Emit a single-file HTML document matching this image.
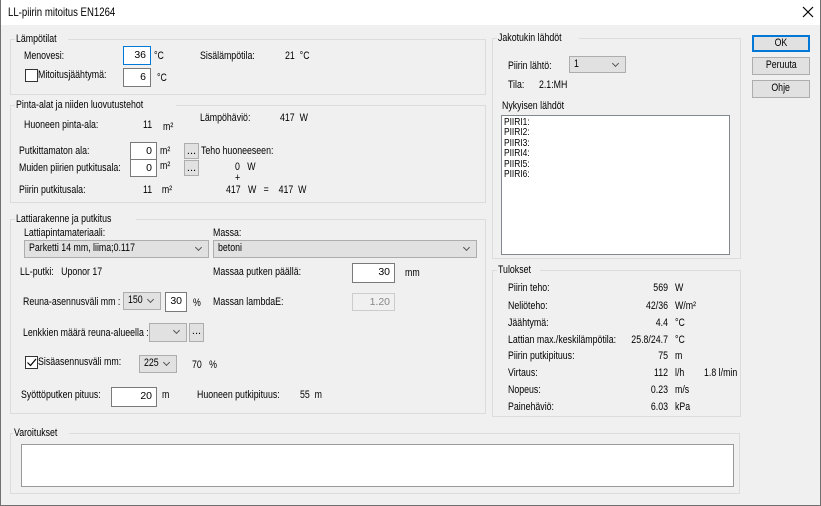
<!DOCTYPE html>
<html><head><meta charset="utf-8"><style>
*{box-sizing:border-box}
body{margin:0;width:821px;height:506px;overflow:hidden;background:#f0f0f0;font-family:"Liberation Sans",sans-serif;font-size:11px;color:#000;position:relative}
.a{position:absolute;white-space:nowrap;line-height:13px;transform:scaleX(0.8);transform-origin:left center}
.r{text-align:right;transform-origin:right center}
.s{display:inline-block;transform:scaleX(0.8);transform-origin:left center;white-space:nowrap}
.t{position:absolute;left:0;top:0;width:821px;height:25px;background:#fff}
.win{position:absolute;left:0;top:0;width:821px;height:506px;border:1px solid #707070;border-top:none;pointer-events:none}
.g{position:absolute;border:1px solid #dcdcdc}
.gl{position:absolute;background:#f0f0f0;padding:0 1px;line-height:12px;top:-7px;left:4px}
.in{position:absolute;background:#fff;border:1px solid #7a7a7a;text-align:right;padding-right:4px;line-height:16px;font-size:10.5px}
.cb{position:absolute;background:#e1e1e1;border:1px solid #adadad;padding-left:4px;line-height:15px;white-space:nowrap;overflow:hidden}
.cb:after{content:"";position:absolute;right:7px;top:4px;width:4px;height:4px;border-right:1px solid #555;border-bottom:1px solid #555;transform:rotate(45deg)}
.bt{position:absolute;background:#e1e1e1;border:1px solid #adadad;text-align:center;line-height:14px}
.ck{position:absolute;width:13px;height:13px;background:#fff;border:1px solid #333}
</style></head><body>
<div class="t"></div>
<div class="a" style="left:8px;top:6px;font-size:12px">LL-piirin mitoitus EN1264</div>
<svg style="position:absolute;left:802px;top:6px" width="12" height="12"><path d="M1 1L11 11M11 1L1 11" stroke="#000" stroke-width="1.2"/></svg>

<div class="g" style="left:10px;top:39px;width:476px;height:56px"><span class="gl"><span class="s">Lämpötilat</span></span></div>
<div class="a" style="left:24px;top:50px">Menovesi:</div>
<div class="in" style="left:123px;top:46px;width:28px;height:19px;border-color:#0078d7">36</div>
<div class="a" style="left:154px;top:50px">°C</div>
<div class="a" style="left:200px;top:50px">Sisälämpötila:</div>
<div class="a" style="left:285px;top:50px">21 &nbsp;°C</div>
<div class="ck" style="left:25px;top:69px"></div>
<div class="a" style="left:38px;top:69px">Mitoitusjäähtymä:</div>
<div class="in" style="left:123px;top:68px;width:28px;height:19px">6</div>
<div class="a" style="left:157px;top:72px">°C</div>

<div class="g" style="left:10px;top:105px;width:476px;height:98px"><span class="gl"><span class="s">Pinta-alat ja niiden luovutustehot</span></span></div>
<div class="a" style="left:24px;top:119px">Huoneen pinta-ala:</div>
<div class="a" style="left:143px;top:119px">11</div>
<div class="a" style="left:163px;top:121px">m²</div>
<div class="a" style="left:200px;top:112px">Lämpöhäviö:</div>
<div class="a" style="left:280px;top:112px">417 &nbsp;W</div>
<div class="a" style="left:19px;top:145px">Putkittamaton ala:</div>
<div class="in" style="left:130px;top:142px;width:27px;height:18px">0</div>
<div class="a" style="left:160px;top:145px">m²</div>
<div class="bt" style="left:184px;top:143px;width:15px;height:16px">...</div>
<div class="a" style="left:201px;top:145px">Teho huoneeseen:</div>
<div class="a" style="left:19px;top:162px">Muiden piirien putkitusala:</div>
<div class="in" style="left:130px;top:159px;width:27px;height:18px">0</div>
<div class="a" style="left:160px;top:160px">m²</div>
<div class="bt" style="left:184px;top:160px;width:15px;height:16px">...</div>
<div class="a" style="left:235px;top:161px">0 &nbsp;&nbsp;W</div>
<div class="a" style="left:235px;top:172px">+</div>
<div class="a" style="left:19px;top:184px">Piirin putkitusala:</div>
<div class="a" style="left:143px;top:184px">11 &nbsp;&nbsp;&nbsp;m²</div>
<div class="a" style="left:226px;top:184px">417 &nbsp;&nbsp;W &nbsp;&nbsp;= &nbsp;&nbsp;&nbsp;417 &nbsp;W</div>

<div class="g" style="left:10px;top:219px;width:476px;height:195px"><span class="gl"><span class="s">Lattiarakenne ja putkitus</span></span></div>
<div class="a" style="left:24px;top:227px">Lattiapintamateriaali:</div>
<div class="cb" style="left:24px;top:240px;width:185px;height:18px"><span class="s">Parketti 14 mm, liima;0.117</span></div>
<div class="a" style="left:213px;top:227px">Massa:</div>
<div class="cb" style="left:213px;top:240px;width:264px;height:18px"><span class="s">betoni</span></div>
<div class="a" style="left:20px;top:266px">LL-putki: &nbsp;&nbsp;Uponor 17</div>
<div class="a" style="left:213px;top:266px">Massaa putken päällä:</div>
<div class="in" style="left:352px;top:263px;width:43px;height:20px">30</div>
<div class="a" style="left:405px;top:267px">mm</div>
<div class="a" style="left:23px;top:296px">Reuna-asennusväli mm :</div>
<div class="cb" style="left:123px;top:292px;width:38px;height:18px"><span class="s">150</span></div>
<div class="in" style="left:165px;top:292px;width:22px;height:20px">30</div>
<div class="a" style="left:193px;top:297px">%</div>
<div class="a" style="left:213px;top:296px">Massan lambdaE:</div>
<div class="in" style="left:352px;top:293px;width:43px;height:18px;background:#f0f0f0;border-color:#ccc;color:#888">1.20</div>
<div class="a" style="left:23px;top:327px">Lenkkien määrä reuna-alueella :</div>
<div class="cb" style="left:149px;top:323px;width:38px;height:19px"></div>
<div class="bt" style="left:189px;top:323px;width:15px;height:19px">...</div>
<div class="ck" style="left:25px;top:356px"></div>
<svg style="position:absolute;left:26px;top:357px" width="11" height="11"><path d="M1.5 5.5L4.5 8.5L10 2" stroke="#000" stroke-width="1.2" fill="none"/></svg>
<div class="a" style="left:38px;top:356px">Sisäasennusväli mm:</div>
<div class="cb" style="left:139px;top:355px;width:38px;height:18px"><span class="s">225</span></div>
<div class="a" style="left:192px;top:359px">70 &nbsp;&nbsp;%</div>
<div class="a" style="left:21px;top:389px">Syöttöputken pituus:</div>
<div class="in" style="left:111px;top:387px;width:46px;height:20px">20</div>
<div class="a" style="left:162px;top:389px">m</div>
<div class="a" style="left:197px;top:389px">Huoneen putkipituus:</div>
<div class="a" style="left:300px;top:389px">55 &nbsp;m</div>

<div class="g" style="left:492px;top:38px;width:249px;height:221px"><span class="gl"><span class="s">Jakotukin lähdöt</span></span></div>
<div class="a" style="left:508px;top:60px">Piirin lähtö:</div>
<div class="cb" style="left:569px;top:56px;width:57px;height:17px"><span class="s">1</span></div>
<div class="a" style="left:508px;top:79px">Tila: &nbsp;&nbsp;&nbsp;&nbsp;&nbsp;2.1:MH</div>
<div class="a" style="left:502px;top:100px">Nykyisen lähdöt</div>
<div style="position:absolute;left:501px;top:115px;width:229px;height:140px;background:#fff;border:1px solid #828790;padding:1px 2px;font-size:10.5px;line-height:10.4px"><span class="s">PIIRI1:<br>PIIRI2:<br>PIIRI3:<br>PIIRI4:<br>PIIRI5:<br>PIIRI6:</span></div>

<div class="g" style="left:492px;top:270px;width:249px;height:147px"><span class="gl"><span class="s">Tulokset</span></span></div>
<div class="a" style="left:508px;top:282px">Piirin teho:</div><div class="a r" style="left:600px;top:282px;width:68px">569</div><div class="a" style="left:675px;top:282px">W</div>
<div class="a" style="left:508px;top:300px">Neliöteho:</div><div class="a r" style="left:600px;top:300px;width:68px">42/36</div><div class="a" style="left:675px;top:300px">W/m²</div>
<div class="a" style="left:508px;top:317px">Jäähtymä:</div><div class="a r" style="left:600px;top:317px;width:68px">4.4</div><div class="a" style="left:675px;top:317px">°C</div>
<div class="a" style="left:508px;top:334px">Lattian max./keskilämpötila:</div><div class="a r" style="left:600px;top:334px;width:68px">25.8/24.7</div><div class="a" style="left:675px;top:334px">°C</div>
<div class="a" style="left:508px;top:350px">Piirin putkipituus:</div><div class="a r" style="left:600px;top:350px;width:68px">75</div><div class="a" style="left:675px;top:350px">m</div>
<div class="a" style="left:508px;top:367px">Virtaus:</div><div class="a r" style="left:600px;top:367px;width:68px">112</div><div class="a" style="left:675px;top:367px">l/h</div><div class="a" style="left:704px;top:367px">1.8 l/min</div>
<div class="a" style="left:508px;top:384px">Nopeus:</div><div class="a r" style="left:600px;top:384px;width:68px">0.23</div><div class="a" style="left:675px;top:384px">m/s</div>
<div class="a" style="left:508px;top:401px">Painehäviö:</div><div class="a r" style="left:600px;top:401px;width:68px">6.03</div><div class="a" style="left:675px;top:401px">kPa</div>

<div class="g" style="left:10px;top:433px;width:730px;height:61px"><span class="gl" style="left:2px"><span class="s">Varoitukset</span></span></div>
<div style="position:absolute;left:21px;top:444px;width:713px;height:43px;background:#fff;border:1px solid #999"></div>

<div class="bt" style="left:752px;top:35px;width:58px;height:17px;border:2px solid #0078d7;line-height:13px"><span class="s" style="transform-origin:center">OK</span></div>
<div class="bt" style="left:752px;top:57px;width:58px;height:18px"><span class="s" style="transform-origin:center">Peruuta</span></div>
<div class="bt" style="left:752px;top:80px;width:58px;height:18px"><span class="s" style="transform-origin:center">Ohje</span></div>
<div class="win"></div>
</body></html>
